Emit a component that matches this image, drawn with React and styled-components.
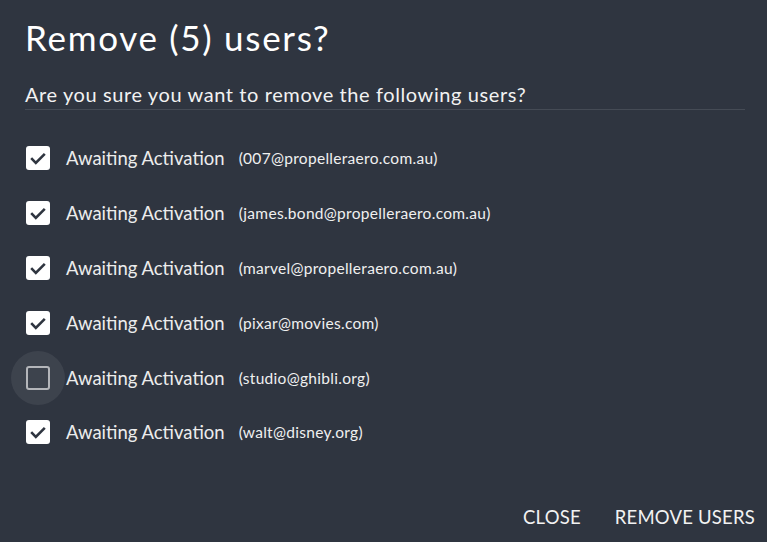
import React, { useState } from "react";
import styled, { createGlobalStyle } from "styled-components";

const Global = createGlobalStyle`
  html, body { margin: 0; padding: 0; background: #2f3540; }
  body { font-family: Lato, "Open Sans", sans-serif; color: #fff; }
`;

const Dialog = styled.div`
  width: 767px;
  height: 542px;
  box-sizing: border-box;
  background: #2f3540;
  display: flex;
  flex-direction: column;
  padding: 0 12px 0 25px;
`;

const Title = styled.h2`
  margin: 0;
  padding-top: 16px;
  font-family: Lato, sans-serif;
  font-weight: 400;
  font-size: 35px;
  line-height: 42px;
  letter-spacing: 1.7px;
  color: #fff;
`;

const Subtitle = styled.p`
  margin: 23px 10px 0 0;
  font-family: Lato, sans-serif;
  font-size: 20px;
  line-height: 26px;
  letter-spacing: 0.6px;
  color: #f2f2f2;
  padding-bottom: 2px;
  border-bottom: 1px solid #454b55;
`;

const List = styled.div`
  display: flex;
  flex-direction: column;
  margin-top: 21px;
  margin-left: -14px;
`;

const Row = styled.label`
  display: flex;
  align-items: center;
  height: 54.8px;
`;

const BoxWrap = styled.span`
  width: 54px;
  height: 54px;
  border-radius: 50%;
  display: flex;
  align-items: center;
  justify-content: center;
  background: ${(p) => (p.$hover ? "rgba(255,255,255,0.07)" : "transparent")};
  flex: none;
`;

const Box = styled.span`
  width: 24px;
  height: 24px;
  box-sizing: border-box;
  border-radius: 3px;
  display: flex;
  align-items: center;
  justify-content: center;
  background: ${(p) => (p.$checked ? "#fff" : "transparent")};
  border: ${(p) => (p.$checked ? "none" : "2.5px solid #b4b6ba")};
`;

const Label = styled.span`
  font-family: Lato, sans-serif;
  font-size: 18.5px;
  color: #ececec;
  margin-left: 1px;
`;

const Email = styled.span`
  font-family: Lato, sans-serif;
  font-size: 15.5px;
  letter-spacing: 0.3px;
  color: #f0f0f0;
  margin-left: 14px;
`;

const Actions = styled.div`
  margin-top: auto;
  display: flex;
  justify-content: flex-end;
  gap: 34px;
  padding-bottom: 14px;
`;

const Button = styled.button`
  background: none;
  border: none;
  padding: 0;
  font-family: Lato, sans-serif;
  font-size: 18.5px;
  color: #f2f2f2;
  text-transform: uppercase;
  letter-spacing: 0.2px;
  cursor: pointer;
`;

const users = [
  { email: "007@propelleraero.com.au", checked: true },
  { email: "james.bond@propelleraero.com.au", checked: true },
  { email: "marvel@propelleraero.com.au", checked: true },
  { email: "pixar@movies.com", checked: true },
  { email: "studio@ghibli.org", checked: false, hover: true },
  { email: "walt@disney.org", checked: true },
];

const Check = () => (
  <svg width="20" height="20" viewBox="0 0 20 20">
    <path d="M3.2 10.2l4.6 4.6L16.8 5.8" fill="none" stroke="#2f3540" strokeWidth="2.6" />
  </svg>
);

export default function App() {
  const [list] = useState(users);
  return (
    <>
      <Global />
      <Dialog>
        <Title>Remove (5) users?</Title>
        <Subtitle>Are you sure you want to remove the following users?</Subtitle>
        <List>
          {list.map((u) => (
            <Row key={u.email}>
              <BoxWrap $hover={u.hover}>
                <Box $checked={u.checked}>{u.checked && <Check />}</Box>
              </BoxWrap>
              <Label>Awaiting Activation</Label>
              <Email>({u.email})</Email>
            </Row>
          ))}
        </List>
        <Actions>
          <Button>Close</Button>
          <Button>Remove users</Button>
        </Actions>
      </Dialog>
    </>
  );
}
